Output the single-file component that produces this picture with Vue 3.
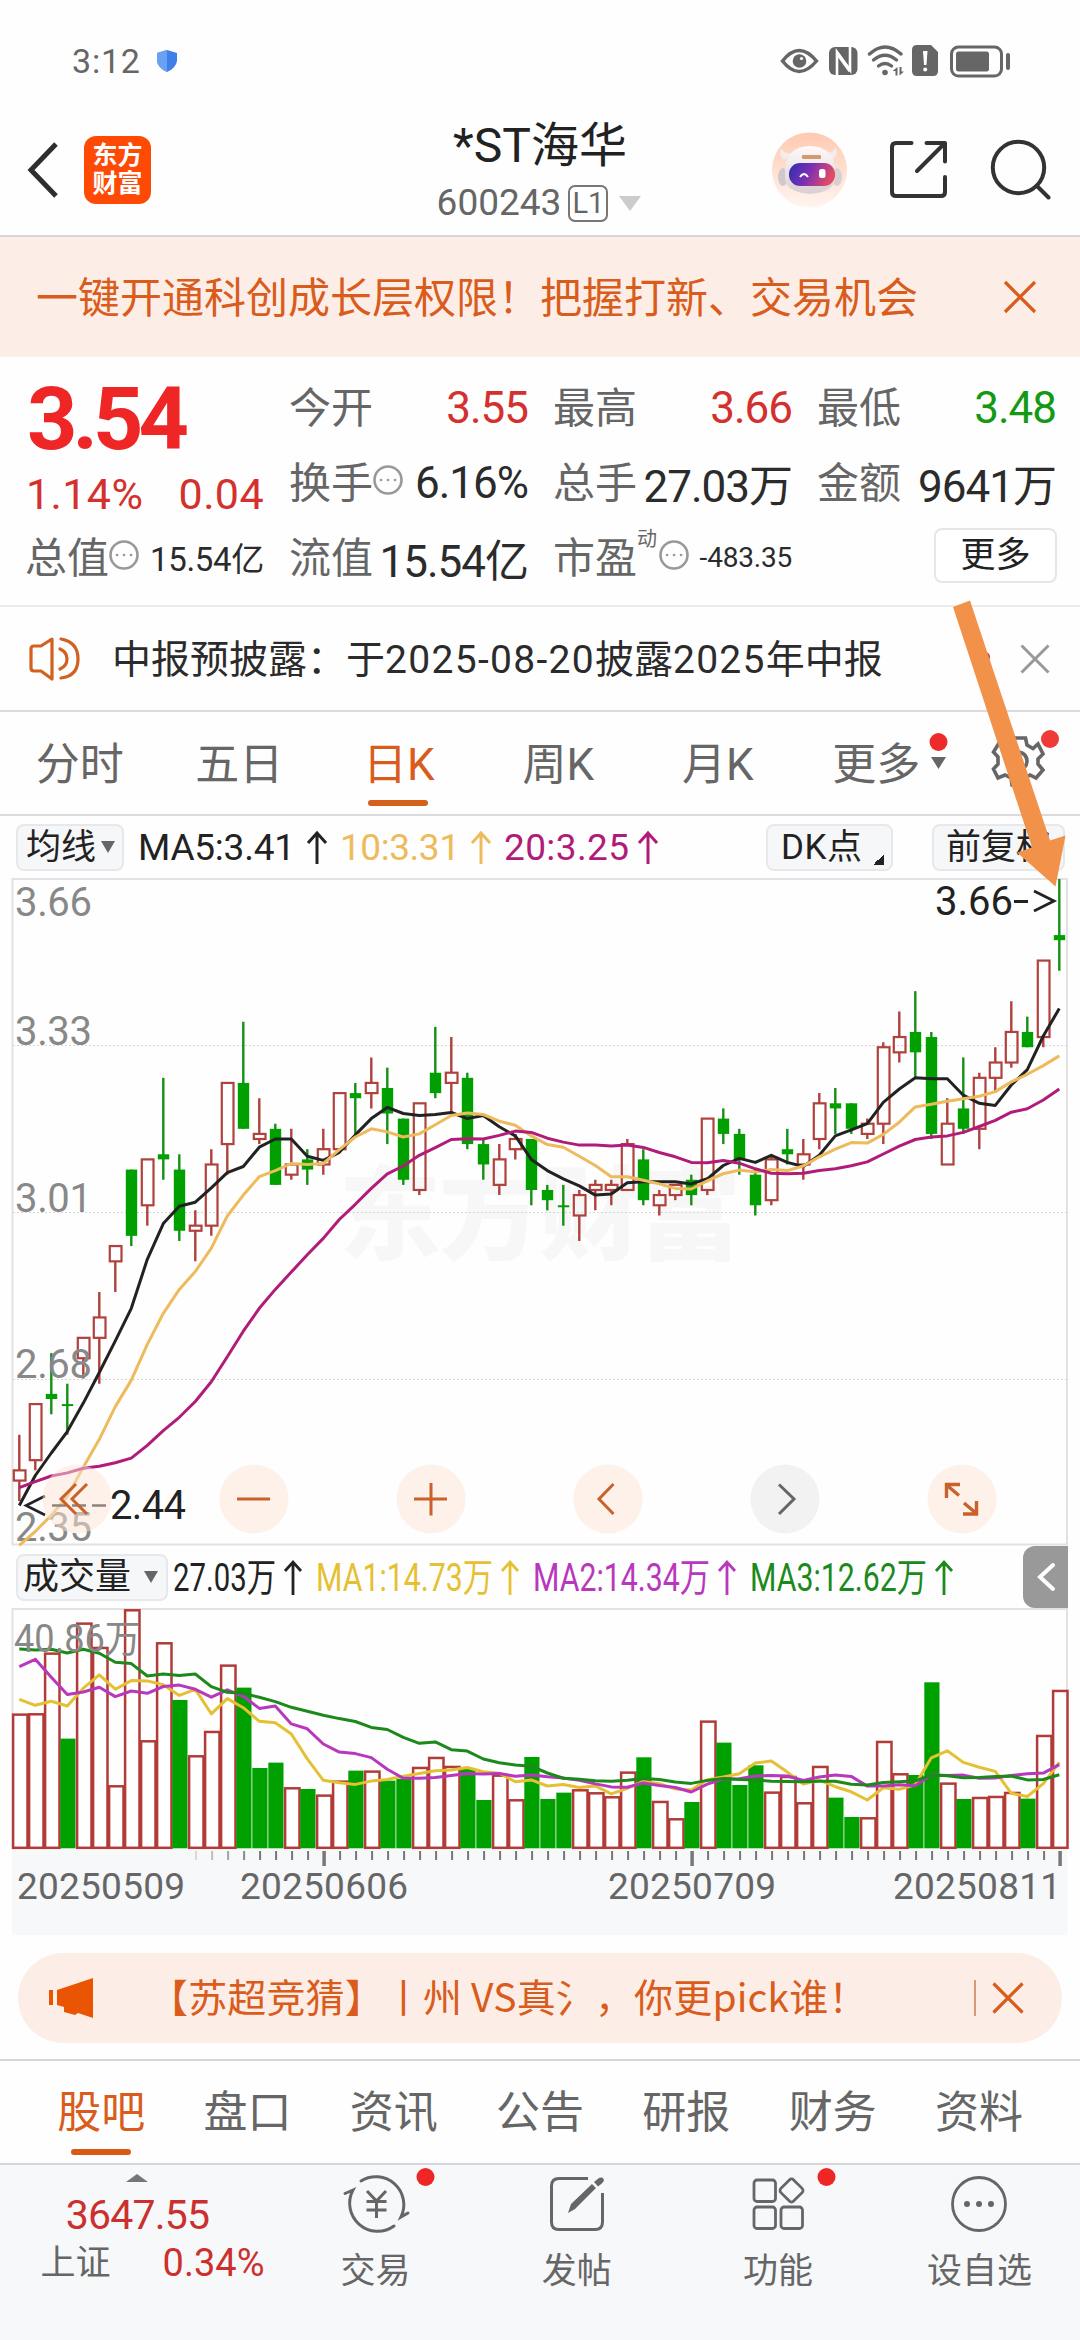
<script setup>
// Daily candles in cents: [open, high, low, close]
const candles = [
  [248, 257, 244, 250], [252, 263, 250, 263], [265, 273, 261, 264], [263, 267, 257, 263], [272, 276, 268, 276],
  [276, 285, 267, 280], [291, 294, 285, 294], [309, 309, 294, 296], [302, 311, 298, 311], [312, 327, 307, 311],
  [309, 312, 295, 297], [297, 301, 291, 298], [298, 313, 296, 310], [314, 326, 308, 326], [326, 338, 317, 317],
  [315, 323, 314, 316], [317, 318, 306, 306], [308, 317, 307, 310], [311, 313, 306, 309], [310, 317, 308, 313],
  [313, 324, 313, 324], [324, 326, 316, 323], [324, 331, 321, 326], [325, 329, 314, 320], [319, 319, 306, 307],
  [305, 322, 304, 322], [328, 337, 323, 324], [326, 335, 320, 328], [327, 328, 313, 314], [314, 315, 307, 310],
  [306, 314, 304, 311], [313, 316, 311, 315], [315, 315, 302, 305], [305, 306, 301, 303], [302, 306, 298, 302],
  [300, 305, 295, 304], [305, 307, 301, 306], [305, 307, 302, 306], [305, 315, 305, 314], [311, 313, 302, 303],
  [302, 305, 300, 304], [304, 306, 303, 306], [307, 308, 302, 304], [305, 319, 304, 319], [319, 321, 314, 316],
  [316, 317, 308, 311], [308, 309, 300, 302], [303, 312, 302, 311], [313, 317, 310, 312], [310, 315, 307, 312],
  [315, 324, 313, 322], [322, 325, 316, 321], [322, 322, 316, 317], [316, 319, 315, 318], [318, 334, 314, 333],
  [332, 340, 330, 335], [336, 344, 327, 332], [335, 336, 315, 316], [310, 323, 310, 318], [321, 331, 316, 317],
  [317, 328, 313, 327], [327, 333, 324, 330], [330, 342, 329, 336], [336, 339, 333, 333], [335, 350, 333, 350],
  [355, 366, 348, 354]
]
// Traded volume, relative to the panel ceiling of 717
const volumes = [
  404, 405, 587, 329, 677, 604, 189, 717, 324, 618, 445, 279, 352, 551, 482, 241, 257, 183, 178, 161, 203, 233,
  233, 203, 208, 244, 274, 247, 239, 145, 221, 147, 274, 148, 167, 177, 168, 156, 230, 273, 142, 90, 139, 383,
  317, 190, 249, 170, 217, 138, 247, 152, 94, 93, 322, 225, 220, 498, 197, 148, 154, 157, 169, 149, 340, 475
]

const cx = i => 19.3 + 16 * i
const py = p => 879 + (366 - p) * 5.098
const vy = v => 1848.3 - v / 3

// Averages before the window is full come from history outside the visible range
const average = (values, n, lead) =>
  values.map((_, i) => (i < lead.length ? lead[i] : values.slice(i - n + 1, i + 1).reduce((a, b) => a + b, 0) / n))
const line = (values, y) => values.map((v, i) => `${cx(i).toFixed(1)},${y(v).toFixed(1)}`).join(' ')

const closes = candles.map(c => c[3])
const priceLines = [
  { color: '#222222', pts: line(average(closes, 5, [243.1, 249, 253.4, 257.6]), py) },
  { color: '#edbb5c', pts: line(average(closes, 10, [235.3, 238, 241.2, 244.9, 250.6, 256.1, 262.5, 267.7, 274.7]), py) },
  { color: '#b01c78', pts: line(average(closes, 20, [246.6, 247.8, 248.9, 249.5, 250.4, 250.8, 251.5, 252.4, 254.9, 257.8, 260.4, 263.5, 267.4, 272.3, 277.3, 281.8, 285.5, 288.9, 292.3]), py) }
]
const volumeLines = [
  { color: '#e6c033', pts: line(average(volumes, 5, [447, 429, 441, 427]), vy) },
  { color: '#b838bd', pts: line(average(volumes, 10, [545, 567, 513, 461, 469, 483, 455, 472, 465]), vy) },
  { color: '#1b8a1b', pts: line(average(volumes, 20, [598, 595, 597, 586, 597, 585, 558, 554, 517, 523, 518, 523, 485, 468, 465, 453, 440, 423, 411]), vy) }
]
const sticks = candles.map(([o, h, l, c], i) => {
  const up = c > o
  return { up, x: cx(i), high: py(h), low: py(l), top: py(Math.max(o, c)), bottom: Math.max(py(Math.min(o, c)), py(Math.max(o, c)) + 2) }
})
const bars = volumes.map((v, i) => ({ up: i === 0 || closes[i] >= closes[i - 1], x: cx(i), y: vy(v), h: v / 3 }))
const ticks = Array.from({ length: 55 }, (_, k) => k + 11).map(i => ({
  x: cx(i) + 0.8, major: [19, 42, 65].includes(i), o: i < 15 ? 0.25 + (i - 11) * 0.2 : 1
}))

const priceLabels = [['3.66', 916], ['3.33', 1045], ['3.01', 1212], ['2.68', 1378], ['2.35', 1541]]
const dates = [['20250509', 19], ['20250606', 242], ['20250709', 610], ['20250811', 895]]
const maLegend = [
  { t: 'MA5:3.41', x: 1, w: 157, a: 180, c: '#222222' },
  { t: '10:3.31', x: 203, w: 120, a: 344, c: '#edbb5c' },
  { t: '20:3.25', x: 367, w: 125, a: 511, c: '#b01c78' }
]
const volLegend = [
  { t: '27.03万', x: 5, w: 103, a: 125, c: '#222222' },
  { t: 'MA1:14.73万', x: 148, w: 177, a: 342, c: '#e6c033' },
  { t: 'MA2:14.34万', x: 365, w: 177, a: 559, c: '#b838bd' },
  { t: 'MA3:12.62万', x: 582, w: 177, a: 776, c: '#1b8a1b' }
]
const periods = ['分时', '五日', '日K', '周K', '月K', '更多']
const sections = ['股吧', '盘口', '资讯', '公告', '研报', '财务', '资料']
</script>

<template>
  <div class="page">
    <div class="status">
      <span class="clock">3:12</span>
      <svg class="shield" width="22" height="24" viewBox="0 0 22 24">
        <path d="M11 1 L21 4 V12 Q20 19 11 23 Q2 19 1 12 V4 Z" fill="#3f7fe8" />
        <path d="M11 1 L1 4 V12 Q2 19 11 23 Z" fill="#6ba1f2" />
      </svg>
      <svg class="sys" width="236" height="36" viewBox="778 43 236 36">
        <path d="M782.500 61 Q799 40 816.500 61 Q799 82 782.500 61 Z" fill="none" stroke="#666" stroke-width="3.500" />
        <circle cx="799.500" cy="61" r="6.800" fill="#666" /><circle cx="801.500" cy="58.500" r="1.600" fill="#fff" />
        <rect x="829" y="47" width="28.500" height="28" rx="6" fill="#666" />
        <path d="M837 75 V52 L850 70 V47" fill="none" stroke="#fff" stroke-width="2.600" />
        <path d="M837 53 L850 71" stroke="#fff" stroke-width="3.400" />
        <g fill="none" stroke="#666" stroke-width="3.400" stroke-linecap="round">
          <path d="M869.500 54 Q885 40 901 54" /><path d="M873.500 60 Q885 50.500 896.500 60" /><path d="M878.500 66 Q885 61 891.500 66" />
        </g>
        <circle cx="885" cy="72.500" r="2.800" fill="#666" />
        <path d="M897.500 67 V75.500 H895.500 V71 H892.500 Z M899.500 67 V75.500 L904 71.500 H901.500 V67 Z" fill="#666" />
        <path d="M917 45 H931 L938 52 V71 Q938 76 933 76 H917 Q912 76 912 71 V50 Q912 45 917 45 Z" fill="#666" />
        <path d="M923 51 H927.500 L926.500 65 H924 Z" fill="#fff" /><circle cx="925.200" cy="69.500" r="2" fill="#fff" />
        <rect x="951.500" y="47" width="50" height="29" rx="7" fill="none" stroke="#666" stroke-width="3" />
        <rect x="956" y="51.500" width="33" height="20" rx="2.500" fill="#666" />
        <rect x="1006" y="53" width="4" height="17" rx="2" fill="#666" />
      </svg>
    </div>

    <header class="head">
      <div class="side">
        <svg width="34" height="58" viewBox="0 0 34 58"><path d="M30 3 L5 29 L30 55" fill="none" stroke="#2e2e2e" stroke-width="5" /></svg>
        <div class="logo"><span>东方</span><span>财富</span></div>
      </div>
      <div class="title">
        <div class="name">*ST海华</div>
        <div class="code">600243<b>L1</b><i></i></div>
      </div>
      <div class="tools">
        <svg width="76" height="76" viewBox="770 131 76 76">
          <defs>
            <linearGradient id="halo" x1="0" y1="0" x2="0" y2="1"><stop offset="0" stop-color="#ffc9b0" /><stop offset="1" stop-color="#fff5f0" /></linearGradient>
            <linearGradient id="visor" x1="0" y1="0" x2="1" y2=".25"><stop offset="0" stop-color="#2c2fae" /><stop offset=".5" stop-color="#7a30b4" /><stop offset="1" stop-color="#e04a68" /></linearGradient>
            <linearGradient id="shell" x1="0" y1="0" x2="0" y2="1"><stop offset="0" stop-color="#fdfafa" /><stop offset="1" stop-color="#d9cfd3" /></linearGradient>
          </defs>
          <circle cx="808.500" cy="169" r="37.500" fill="url(#halo)" />
          <path d="M783 159 Q777 154 780 147 Q783 154 792 152 Z M831 159 Q838 154 835 147 Q831 153 823 152 Z" fill="#f3ecec" />
          <ellipse cx="782" cy="176" rx="5" ry="9" fill="#cfc8cc" /><ellipse cx="836" cy="176" rx="5" ry="9" fill="#d8cfd2" />
          <path d="M784 168 Q785 146 809 145 Q833 146 834 168 V178 Q833 191 809 193 Q785 191 784 178 Z" fill="url(#shell)" />
          <rect x="801" y="154" width="19" height="4" rx="1" fill="#d39a70" />
          <rect x="788" y="162" width="46" height="23" rx="11" fill="url(#visor)" />
          <path d="M799 176 Q803 170 807 176" fill="none" stroke="#fff" stroke-width="2" /><rect x="818" y="168" width="6.500" height="9" rx="2.500" fill="#fff" />
        </svg>
        <svg width="62" height="62" viewBox="885 138 62 62">
          <g fill="none" stroke="#333" stroke-width="4" stroke-linecap="round" stroke-linejoin="round">
            <path d="M909.500 143 H894 Q890 143 890 147 V192 Q890 196 894 196 H939 Q943 196 943 192 V177" />
            <path d="M924.500 143 H943 V161.500 M942 144 L915 171" />
          </g>
        </svg>
        <svg width="62" height="62" viewBox="989 137 62 62">
          <g fill="none" stroke="#333" stroke-width="4" stroke-linecap="round">
            <circle cx="1018.500" cy="166.500" r="25.700" /><path d="M1037 185 L1048.500 196.500" />
          </g>
        </svg>
      </div>
    </header>

    <div class="banner">
      <span>一键开通科创成长层权限！把握打新、交易机会</span>
      <svg width="34" height="34" viewBox="0 0 34 34"><path d="M2 2 L32 32 M32 2 L2 32" stroke="#da5c1c" stroke-width="3.200" /></svg>
    </div>

    <section class="quote">
      <div class="col first">
        <div class="big">3.54</div>
        <div class="cell red chg"><span>1.14%</span><span>0.04</span></div>
        <div class="cell"><label>总值</label><svg class="q" viewBox="0 0 30 30"><circle cx="15" cy="15" r="13.500" /><path d="M8 15h.1M15 15h.1M22 15h.1" /></svg><em class="mid">15.54亿</em></div>
      </div>
      <div class="col">
        <div class="cell"><label>今开</label><em class="red">3.55</em></div>
        <div class="cell"><label>换手</label><svg class="q" viewBox="0 0 30 30"><circle cx="15" cy="15" r="13.500" /><path d="M8 15h.1M15 15h.1M22 15h.1" /></svg><em>6.16%</em></div>
        <div class="cell"><label>流值</label><em>15.54亿</em></div>
      </div>
      <div class="col">
        <div class="cell"><label>最高</label><em class="red">3.66</em></div>
        <div class="cell"><label>总手</label><em>27.03万</em></div>
        <div class="cell"><label>市盈<sup>动</sup></label><svg class="q pe" viewBox="0 0 30 30"><circle cx="15" cy="15" r="13.500" /><path d="M8 15h.1M15 15h.1M22 15h.1" /></svg><em class="small">-483.35</em></div>
      </div>
      <div class="col">
        <div class="cell"><label>最低</label><em class="green">3.48</em></div>
        <div class="cell"><label>金额</label><em>9641万</em></div>
        <div class="cell end"><button class="more">更多</button></div>
      </div>
    </section>

    <div class="notice">
      <svg width="52" height="46" viewBox="0 0 52 46">
        <g fill="none" stroke="#d2601f" stroke-width="3.200" stroke-linejoin="round" stroke-linecap="round">
          <path d="M23 3 L12 10 H5 Q2 10 2 13 V32 Q2 35 5 35 H12 L23 43 Z" /><path d="M31 13 Q38 16 38 23 Q38 30 31 33" /><path d="M32 3 Q49 6 49 23 Q49 40 32 42" />
        </g>
      </svg>
      <p>中报预披露：于<span>2025-08-20</span>披露<span>2025</span>年中报</p>
      <svg class="x" width="30" height="30" viewBox="0 0 30 30"><path d="M1.500 1.500 L28.500 28.500 M28.500 1.500 L1.500 28.500" stroke="#999" stroke-width="3" /></svg>
    </div>

    <nav class="periods">
      <div v-for="p in periods" :key="p" :class="{ on: p === '日K', drop: p === '更多' }">
        <span>{{ p }}</span>
        <svg v-if="p === '更多'" width="26" height="44" viewBox="0 0 26 44"><circle cx="13.500" cy="11" r="9" fill="#ee2a2a" /><path d="M6 26 H21 L13.500 38 Z" fill="#666" /></svg>
      </div>
      <svg class="gear" width="70" height="64" viewBox="990 732 70 64">
        <path d="M1010.500 741 H1025.500 L1027 748 L1033 751.500 L1038 747 L1043 757 L1038 762 V767 L1043 773 L1036 781 L1030 778 L1025 781 L1024 788 H1012 L1011 781 L1005 778 L998 781 L993.500 772 L998 767 V760 L993.500 755 L999 746 L1005 750 L1010 747 Z" fill="none" stroke="#666" stroke-width="3.600" />
        <circle cx="1018" cy="764" r="9" fill="none" stroke="#666" stroke-width="3.600" /><circle cx="1050" cy="742" r="9" fill="#ef3a38" />
      </svg>
    </nav>

    <div class="legend">
      <button class="tag avg">均线<i></i></button>
      <svg width="620" height="62" viewBox="0 816 620 62">
        <g v-for="m in maLegend" :key="m.t" :fill="m.c">
          <text :x="m.x" y="859.500" :textLength="m.w" font-size="37">{{ m.t }}</text>
          <path :d="`M${m.a} 864 V833 M${m.a - 9} 843 L${m.a} 833 L${m.a + 9} 843`" fill="none" :stroke="m.c" stroke-width="3" />
        </g>
      </svg>
      <button class="tag dk">DK点<i></i></button>
      <button class="tag adj">前复权</button>
    </div>

    <svg class="chart" width="1080" height="668" viewBox="0 878 1080 668">
      <text x="540" y="1252" text-anchor="middle" textLength="402" font-size="102" font-weight="900" fill="#f7f7f7">东方财富</text>
      <rect x="12.500" y="879" width="1054.500" height="665.500" fill="none" stroke="#e2e2e2" stroke-width="2" />
      <path v-for="y in [1045.500, 1212.500, 1379.500]" :key="y" :d="`M13 ${y}H1067`" stroke="#d6d6d6" stroke-width="1.200" stroke-dasharray="2 2" />
      <g v-for="(s, i) in sticks" :key="i">
        <template v-if="s.up">
          <path :d="`M${s.x} ${s.high}V${s.top}M${s.x} ${s.bottom}V${s.low}`" stroke="#b0413d" stroke-width="2.400" />
          <rect :x="s.x - 5.500" :y="s.top" width="11.700" :height="s.bottom - s.top" fill="none" stroke="#b0413d" stroke-width="2.200" />
        </template>
        <template v-else>
          <path :d="`M${s.x} ${s.high}V${s.low}`" stroke="#149014" stroke-width="2.400" />
          <rect :x="s.x - 5.500" :y="s.top" width="11.400" :height="s.bottom - s.top" fill="#00a000" />
        </template>
      </g>
      <text v-for="l in priceLabels" :key="l[0]" x="15" :y="l[1]" textLength="77" font-size="40" fill="#888">{{ l[0] }}</text>
      <polyline v-for="l in priceLines" :key="l.color" :points="l.pts" fill="none" :stroke="l.color" stroke-width="3" stroke-linejoin="round" />
      <text x="935" y="915" textLength="78" font-size="40" fill="#222">3.66</text>
      <path d="M1014 901.500 H1028 M1034 891 L1054 901 L1034 911" fill="none" stroke="#222" stroke-width="2.800" />
      <path d="M45 1496 L26 1505.500 L45 1515 M52 1505.500H66M72 1505.500H86M92 1505.500H106" fill="none" stroke="#222" stroke-width="2.600" />
      <text x="110" y="1518.500" textLength="76" font-size="40" fill="#222">2.44</text>
      <g fill="#fde3d5" fill-opacity=".5">
        <circle v-for="x in [77, 254, 431, 608, 962]" :key="x" :cx="x" cy="1499" r="34.500" />
      </g>
      <circle cx="785" cy="1499" r="34.500" fill="#f2f2f2" />
      <g fill="none" stroke="#c8622a" stroke-width="3">
        <path d="M76 1484 L61 1499 L76 1514 M87 1484 L72 1499 L87 1514" />
        <path d="M237 1499 H270 M414 1499 H447 M431 1483 V1515.500" />
        <path d="M613.500 1484 L599 1499 L613.500 1514" />
        <path d="M959 1495.500 L946 1484.500 M946.500 1498 V1484.500 H960 M964 1503 L977 1514 M963 1514 H976.500 V1501" stroke-width="3.400" />
      </g>
      <path d="M779 1484.500 L794 1499 L779 1514" fill="none" stroke="#666" stroke-width="3" />
    </svg>

    <div class="legend vol">
      <button class="tag qty">成交量<i></i></button>
      <svg width="800" height="62" viewBox="0 1546 800 62">
        <g v-for="m in volLegend" :key="m.t" :fill="m.c">
          <text :x="m.x" y="1590.500" :textLength="m.w" lengthAdjust="spacingAndGlyphs" font-size="39">{{ m.t }}</text>
          <path :d="`M${m.a} 1595 V1562 M${m.a - 8} 1571 L${m.a} 1562 L${m.a + 8} 1571`" fill="none" :stroke="m.c" stroke-width="2.800" />
        </g>
      </svg>
      <div class="fold"><svg width="20" height="30" viewBox="0 0 20 30"><path d="M17 3 L4 15 L17 27" fill="none" stroke="#fff" stroke-width="4" stroke-linecap="round" /></svg></div>
    </div>

    <svg class="chart" width="1080" height="327" viewBox="0 1608 1080 327">
      <rect x="12" y="1849" width="1055.500" height="86" fill="#f7f8fa" />
      <path d="M12.500 1849 V1609 H1067 V1849" fill="none" stroke="#e2e2e2" stroke-width="2" />
      <template v-for="(b, i) in bars" :key="i">
        <rect v-if="b.up" :x="b.x - 6.200" :y="b.y + 1" width="14.400" :height="b.h - 1.500" fill="#fff" stroke="#b23b38" stroke-width="2.500" />
        <rect v-else :x="b.x - 7" :y="b.y" width="15.200" :height="b.h" fill="#00a000" />
      </template>
      <polyline v-for="l in volumeLines" :key="l.color" :points="l.pts" fill="none" :stroke="l.color" stroke-width="3" stroke-linejoin="round" />
      <text x="14" y="1652" textLength="127" lengthAdjust="spacingAndGlyphs" font-size="38" fill="#888">40.86万</text>
      <path v-for="t in ticks" :key="t.x" :d="`M${t.x} 1851V${t.major ? 1866 : 1860}`" stroke="#777" :stroke-opacity="t.o" :stroke-width="t.major ? 3.500 : 2" />
      <text v-for="d in dates" :key="d[0]" :x="d[1] - 2" y="1899" textLength="168" font-size="37" fill="#666">{{ d[0] }}</text>
    </svg>

    <div class="promo">
      <svg width="48" height="40" viewBox="0 0 48 40"><path d="M1 12 H5 V27 H1 Z M9 12 L45 0 V40 L30 35 L27 37 L16 34 V29 L9 27 Z" fill="#ea5504" /></svg>
      <p>【苏超竞猜】丨州 VS真氵，你更pick谁！</p>
      <i></i>
      <svg width="32" height="32" viewBox="0 0 32 32"><path d="M1.500 1.500 L30.500 30.500 M30.500 1.500 L1.500 30.500" stroke="#da5c1c" stroke-width="3.200" /></svg>
    </div>

    <nav class="sections">
      <div v-for="s in sections" :key="s" :class="{ on: s === '股吧' }">{{ s }}</div>
    </nav>

    <footer class="dock">
      <div class="index">
        <svg width="22" height="8" viewBox="0 0 22 8"><path d="M0 8 L11 0 L22 8 Z" fill="#777" /></svg>
        <strong>3647.55</strong>
        <div><span>上证</span><em>0.34%</em></div>
      </div>
      <div class="item">
        <svg width="120" height="69" viewBox="315 2168 120 69">
          <g fill="none" stroke="#666" stroke-width="3" stroke-linecap="round">
            <path d="M360 2181 A28 28 0 0 1 400 2217 L407 2213" />
            <path d="M393 2226 A28 28 0 0 1 352 2190 L344 2193.500" />
            <path d="M366 2191 L375.500 2201 L385 2191 M365.500 2201.500 H385.500 M365.500 2210 H385.500 M375.500 2201 V2218" stroke-linecap="butt" />
          </g>
          <circle cx="424.500" cy="2177" r="9" fill="#ee2626" />
        </svg>
        <span>交易</span>
      </div>
      <div class="item">
        <svg width="120" height="69" viewBox="517 2168 120 69">
          <path d="M588 2178.500 H559 Q551.500 2178.500 551.500 2186 V2222 Q551.500 2229.500 559 2229.500 H595 Q602.500 2229.500 602.500 2222 V2193" fill="none" stroke="#666" stroke-width="3" />
          <path d="M568 2213 L571 2204 L592 2184 L596 2188 L575 2209 Z M594 2182 L599 2178 Q603 2176.500 604 2180 Q604 2182 598 2186.500 Z" fill="#666" />
        </svg>
        <span>发帖</span>
      </div>
      <div class="item">
        <svg width="120" height="69" viewBox="718 2168 120 69">
          <g fill="none" stroke="#666" stroke-width="2.800">
            <rect x="754" y="2180" width="21.500" height="21.500" rx="3" /><rect x="754" y="2207" width="21.500" height="21.500" rx="3" /><rect x="781" y="2207" width="21.500" height="21.500" rx="3" />
            <rect x="782.500" y="2181.500" width="18" height="18" rx="3" transform="rotate(45 791.500 2190.500)" />
          </g>
          <circle cx="826.500" cy="2177" r="9" fill="#ee2626" />
        </svg>
        <span>功能</span>
      </div>
      <div class="item">
        <svg width="120" height="69" viewBox="919 2168 120 69">
          <circle cx="979" cy="2204" r="26.500" fill="none" stroke="#666" stroke-width="2.800" />
          <g fill="#666"><circle cx="967" cy="2204" r="3" /><circle cx="979" cy="2204" r="3" /><circle cx="991" cy="2204" r="3" /></g>
        </svg>
        <span>设自选</span>
      </div>
    </footer>

    <svg class="pointer" width="130" height="300" viewBox="945 595 130 300">
      <circle cx="985" cy="657" r="5" fill="#d9302c" />
      <path d="M953 607 L970 600.500 L1050 840.500 L1065.500 835.500 L1055.500 886.500 L1017 852.500 L1032 847.500 Z" fill="#f2924a" />
    </svg>
  </div>
</template>

<style>
body { margin: 0; background: #fefefe; }
</style>

<style scoped>
.page { position: relative; width: 1080px; height: 2340px; overflow: hidden; background: #fefefe; color: #222; font-family: Roboto, 'Noto Sans CJK SC', sans-serif; }
.page * { box-sizing: border-box; }
svg { display: block; flex: none; }
p, em, i, b { margin: 0; font-style: normal; font-weight: 400; }
button { font: inherit; color: inherit; padding: 0; }
.red { color: #d4302e !important; }
.green { color: #149914 !important; }

.status { display: flex; align-items: center; height: 107px; padding: 15px 66px 0 72px; color: #666; }
.clock { font-size: 34px; letter-spacing: .8px; width: 84px; }
.sys { margin-left: auto; }

.head { display: flex; justify-content: space-between; height: 130px; border-bottom: 2px solid #d6d6d6; }
.side { display: flex; align-items: center; width: 360px; padding: 0 0 2px 26px; gap: 24px; height: 128px; }
.logo { display: flex; flex-direction: column; align-items: center; justify-content: center; width: 67px; height: 68px; border-radius: 12px; background: #ff4a06; color: #fff; font-weight: 700; font-size: 25px; line-height: 28px; }
.title { display: flex; flex-direction: column; align-items: center; width: 360px; }
.name { font-size: 48px; line-height: 64px; margin-top: 7px; }
.code { display: flex; align-items: center; font-size: 37px; line-height: 44px; margin-top: 3px; color: #666; margin-left: -2px; }
.code b { width: 40px; height: 37px; margin-left: 7px; border: 2px solid #777; border-radius: 7px; font-size: 29px; line-height: 33px; text-align: center; }
.code i { margin-left: 11px; border: 11px solid transparent; border-top: 15px solid #ccc; border-bottom: 0; }
.tools { display: flex; align-items: center; justify-content: flex-end; gap: 40px; width: 360px; height: 128px; padding: 0 29px 4px 0; }
.tools svg:first-child { margin: 2px 0 0; }

.banner { display: flex; align-items: center; justify-content: space-between; height: 120px; padding: 0 43px 0 36px; background: #fceee6; color: #da5c1c; font-size: 42px; }
.banner span { margin-top: -6px; }

.quote { display: flex; height: 250px; padding: 13px 24px 0 26px; gap: 26px; border-bottom: 2px solid #ececec; }
.col { width: 238px; }
.cell { display: flex; align-items: center; height: 75px; }
.cell label { margin: -6px 0 0 -1px; font-size: 42px; color: #666; white-space: nowrap; }
.cell em { margin-left: auto; font-size: 44px; letter-spacing: -1px; color: #2b2b2b; white-space: nowrap; }
.cell em.mid { font-size: 33px; letter-spacing: -.3px; margin-top: -2px; }
.cell em.small { font-size: 28px; letter-spacing: -.2px; }
.cell.end { justify-content: flex-end; }
.q { width: 30px; height: 30px; margin: -6px 0 0 0; fill: none; stroke: #999; stroke-width: 2.600; stroke-linecap: round; }
.q.pe { margin-left: 2px; }
.cell sup { display: inline-block; font-size: 20px; line-height: 20px; vertical-align: 27px; }
.big { height: 98px; padding-left: 1px; font-size: 88px; line-height: 98px; font-weight: 700; letter-spacing: -5px; color: #ee2626; }
.cell.chg { height: 52px; justify-content: space-between; font-size: 43px; line-height: 52px; letter-spacing: .4px; }
.first .cell:last-child { height: 75px; }
.more { width: 123px; height: 55px; border: 2px solid #e6e6e6; border-radius: 8px; background: #fff; font-size: 35px; line-height: 50px; margin: -4px -1px 0 0; }

.notice { display: flex; align-items: center; height: 105px; padding: 0 30px 0 29px; border-bottom: 2px solid #dadada; }
.notice p { margin: -6px 0 0 31px; font-size: 39px; color: #2b2b2b; white-space: nowrap; }
.notice p span { letter-spacing: 1.300px; }
.notice .x { margin-left: auto; }

.periods { display: flex; height: 104px; border-bottom: 2px solid #dadada; color: #666; font-size: 44px; line-height: 106px; }
.periods div { position: relative; display: flex; justify-content: center; width: 159.500px; }
.periods .on { color: #da5c1c; }
.periods .on::after { content: ''; position: absolute; bottom: 8px; left: 50%; width: 60px; height: 6px; margin-left: -31px; border-radius: 3px; background: #d5601c; }
.periods .drop svg { margin: 19px -31px 0 5px; }
.periods .drop { left: -1px; }
.gear { margin: 17px 0 0 33px; }

.legend { display: flex; align-items: center; height: 62px; }
.tag { display: flex; align-items: center; height: 47px; flex: none; border: 2px solid #e6e8eb; border-radius: 8px; background: #f6f7f9; font-size: 35px; line-height: 43px; }
.tag i { border: 7.500px solid transparent; border-top: 12px solid #666; border-bottom: 0; }
.avg { width: 108px; margin: 0 13px 0 16px; padding-left: 8px; }
.avg i { margin-left: 5px; }
.dk { width: 127px; margin-left: 9px; padding-left: 13px; letter-spacing: .5px; }
.dk i { width: 11px; height: 11px; margin: 24px 0 0 11px; border: 0; background: linear-gradient(135deg, transparent 50%, #222 50%); }
.adj { width: 133px; margin-left: 39px; padding-left: 12px; }
.qty { width: 152px; padding-left: 5px; margin-left: 16px; font-size: 36px; }
.qty i { margin-left: 13px; }
.fold { display: flex; align-items: center; justify-content: center; width: 45px; height: 62px; margin-left: 55px; border-radius: 12px 0 0 12px; background: #999; }
.chart { display: block; overflow: visible; }

.promo { display: flex; align-items: center; width: 1044px; height: 90px; margin: 18px 18px 0; padding: 0 38px 0 30px; border-radius: 45px; background: #fceee6; color: #da5c1c; font-size: 39px; }
.promo p { margin: -7px 0 0 53px; white-space: nowrap; font-family: 'Noto Sans CJK SC', sans-serif; letter-spacing: .15px; }
.promo i { width: 2px; height: 36px; margin: 0 16px 0 auto; background: #d99a78; }

.sections { display: flex; height: 106px; margin-top: 16px; padding-left: 28px; border-top: 2px solid #d6d6d6; border-bottom: 2px solid #d6d6d6; color: #666; font-size: 44px; line-height: 105px; }
.sections div { position: relative; width: 146.300px; text-align: center; }
.sections .on { color: #da5c1c; }
.sections .on::after { content: ''; position: absolute; left: 43px; bottom: 8px; width: 60px; height: 6px; border-radius: 3px; background: #d95a14; }

.dock { display: flex; height: 177px; background: #f7f8fa; color: #666; }
.index { display: flex; flex-direction: column; align-items: center; width: 275px; padding-top: 9px; }
.index strong { margin-top: 9px; font-size: 41px; line-height: 48px; font-weight: 400; letter-spacing: -.8px; color: #cc302e; }
.index div { display: flex; justify-content: space-between; width: 224px; margin-left: 30px; font-size: 35px; line-height: 48px; }
.index div span { margin-top: 1px; }
.index em { font-size: 38px; color: #cc302e; }
.item { display: flex; flex-direction: column; align-items: center; width: 201.300px; padding-top: 3px; font-size: 35px; line-height: 50px; }
.item span { margin-top: 10px; }

.pointer { position: absolute; left: 945px; top: 595px; }
</style>
